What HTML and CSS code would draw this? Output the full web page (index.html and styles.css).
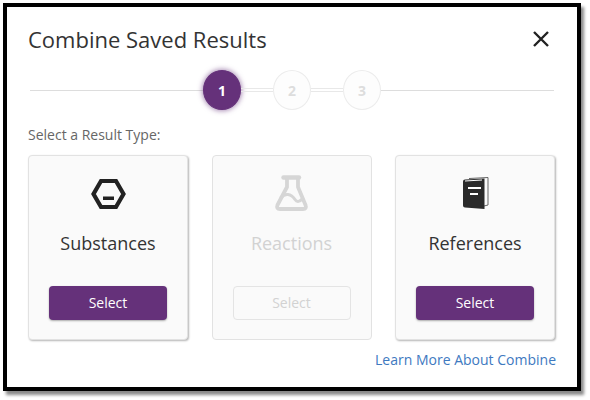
FILE: index.html
```html
<!DOCTYPE html>
<html lang="en">
<head>
<meta charset="utf-8">
<title>Combine Saved Results</title>
<link rel="stylesheet" href="styles.css">
</head>
<body>
<div class="frame">
  <div class="modal">
    <header class="modal-head">
      <h1 class="title">Combine Saved Results</h1>
      <button class="close" aria-label="Close">
        <svg viewBox="0 0 18 18" width="18" height="18"><path d="M2 2L16 16M16 2L2 16" fill="none" stroke="#222" stroke-width="2.400"/></svg>
      </button>
    </header>
    <div class="stepper">
      <span class="line"></span>
      <span class="step step-active">1</span>
      <span class="link-line"></span>
      <span class="step">2</span>
      <span class="link-line"></span>
      <span class="step">3</span>
      <span class="line"></span>
    </div>
    <p class="prompt">Select a Result Type:</p>
    <div class="cards">
      <section class="card">
        <svg class="icon" viewBox="0 0 44 44" width="44" height="44">
          <path d="M15 9H30L37.500 22L30 35H15L7.500 22Z" fill="none" stroke="#222" stroke-width="4.200"/>
          <rect x="17" y="24.500" width="11" height="3.500" fill="#222"/>
        </svg>
        <h2 class="card-label">Substances</h2>
        <button class="btn">Select</button>
      </section>
      <section class="card card-disabled">
        <svg class="icon" viewBox="0 0 44 44" width="44" height="44">
          <path d="M13.500 5.500H29" fill="none" stroke="#d6d6d6" stroke-width="4.400" stroke-linecap="round"/>
          <path d="M17 6V15L7.500 33Q6 37 10 37H33Q37 37 35.500 33L28 15V6" fill="none" stroke="#d6d6d6" stroke-width="3.800" stroke-linejoin="round"/>
          <path d="M10.500 26Q14 22 18 22.500T25 27.500T33 26" fill="none" stroke="#d6d6d6" stroke-width="3"/>
        </svg>
        <h2 class="card-label">Reactions</h2>
        <button class="btn" disabled>Select</button>
      </section>
      <section class="card">
        <svg class="icon" viewBox="0 0 44 44" width="44" height="44">
          <path d="M16 6.500L35 5.500V33L31 34" fill="none" stroke="#666" stroke-width="1"/>
          <path d="M10 9.500Q10 7.500 12 7.500L31.500 6.500V37L12 35.500Q10 35.500 10 33.500Z" fill="#2a2a2a"/>
          <path d="M12 9L29 8" stroke="#fff" stroke-width="1" fill="none"/>
          <rect x="15" y="15" width="13" height="2" fill="#fff"/>
          <rect x="17" y="21" width="8" height="2" fill="#fff"/>
        </svg>
        <h2 class="card-label">References</h2>
        <button class="btn">Select</button>
      </section>
    </div>
    <footer class="modal-foot"><a class="learn" href="#">Learn More About Combine</a></footer>
  </div>
</div>
</body>
</html>
```

FILE: styles.css
```css
* { box-sizing: border-box; }
html, body { margin: 0; padding: 0; background: #fff; }
body { width: 590px; height: 400px; overflow: hidden; font-family: "Open Sans", "Liberation Sans", sans-serif; color: #333; }
.frame { margin: 3px 0 0 3px; width: 578px; height: 388px; border: 4px solid #000; box-shadow: 3px 4px 3px #8a8a8a; }
.modal { height: 100%; background: #fff; padding: 0 21px 0 21px; border-radius: 4px; }
.modal-head { display: flex; justify-content: space-between; align-items: center; height: 54px; padding-top: 9px; }
.title { margin: 0; font-size: 22px; font-weight: 400; line-height: 30px; color: #333; }
.close { display: flex; border: 0; background: none; padding: 0; margin-right: 6px; }
.stepper { display: flex; align-items: center; height: 40px; margin: 9px 2px 0 2px; }
.line { flex: 1; height: 1px; background: #ddd; }
.link-line { width: 32px; height: 4px; border-top: 1px solid #e8e8e8; border-bottom: 1px solid #e8e8e8; }
.step { width: 38px; height: 40px; border-radius: 50%; border: 1px solid #ececec; display: flex; align-items: center; justify-content: center; font-size: 14px; font-weight: 700; color: #ddd; background: #fdfdfd; }
.step-active { background: #65317a; border-color: #65317a; color: #fff; box-shadow: 0 0 5px 1px rgba(101, 49, 122, .55); }
.prompt { margin: 16px 0 0; font-size: 14px; line-height: 18px; color: #666; }
.cards { display: grid; grid-template-columns: repeat(3, 160px); column-gap: 23.5px; margin-top: 11px; }
.card { height: 185px; background: #fafafa; border: 1px solid #e2e2e2; border-radius: 4px; box-shadow: 1px 1px 2px #b5b5b5; display: flex; flex-direction: column; align-items: center; padding-top: 16px; }
.icon { display: block; }
.card-label { margin: 12px 0 0; font-size: 18px; font-weight: 400; line-height: 30px; color: #333; }
.btn { margin-top: 28px; width: 118px; height: 34px; border: 0; border-radius: 4px; background: #65317a; color: #fff; font: 400 14px "Open Sans", "Liberation Sans", sans-serif; box-shadow: 0 1px 2px #aaa; padding: 0 0 2px; }
.card-disabled { box-shadow: none; }
.card-disabled .card-label { color: #d2d2d2; }
.card-disabled .btn { background: #fafafa; color: #d2d2d2; border: 1px solid #e4e4e4; box-shadow: none; }
.modal-foot { display: flex; justify-content: flex-end; margin-top: 10px; }
.learn { font-size: 14px; line-height: 20px; color: #4079bf; text-decoration: none; }
```
